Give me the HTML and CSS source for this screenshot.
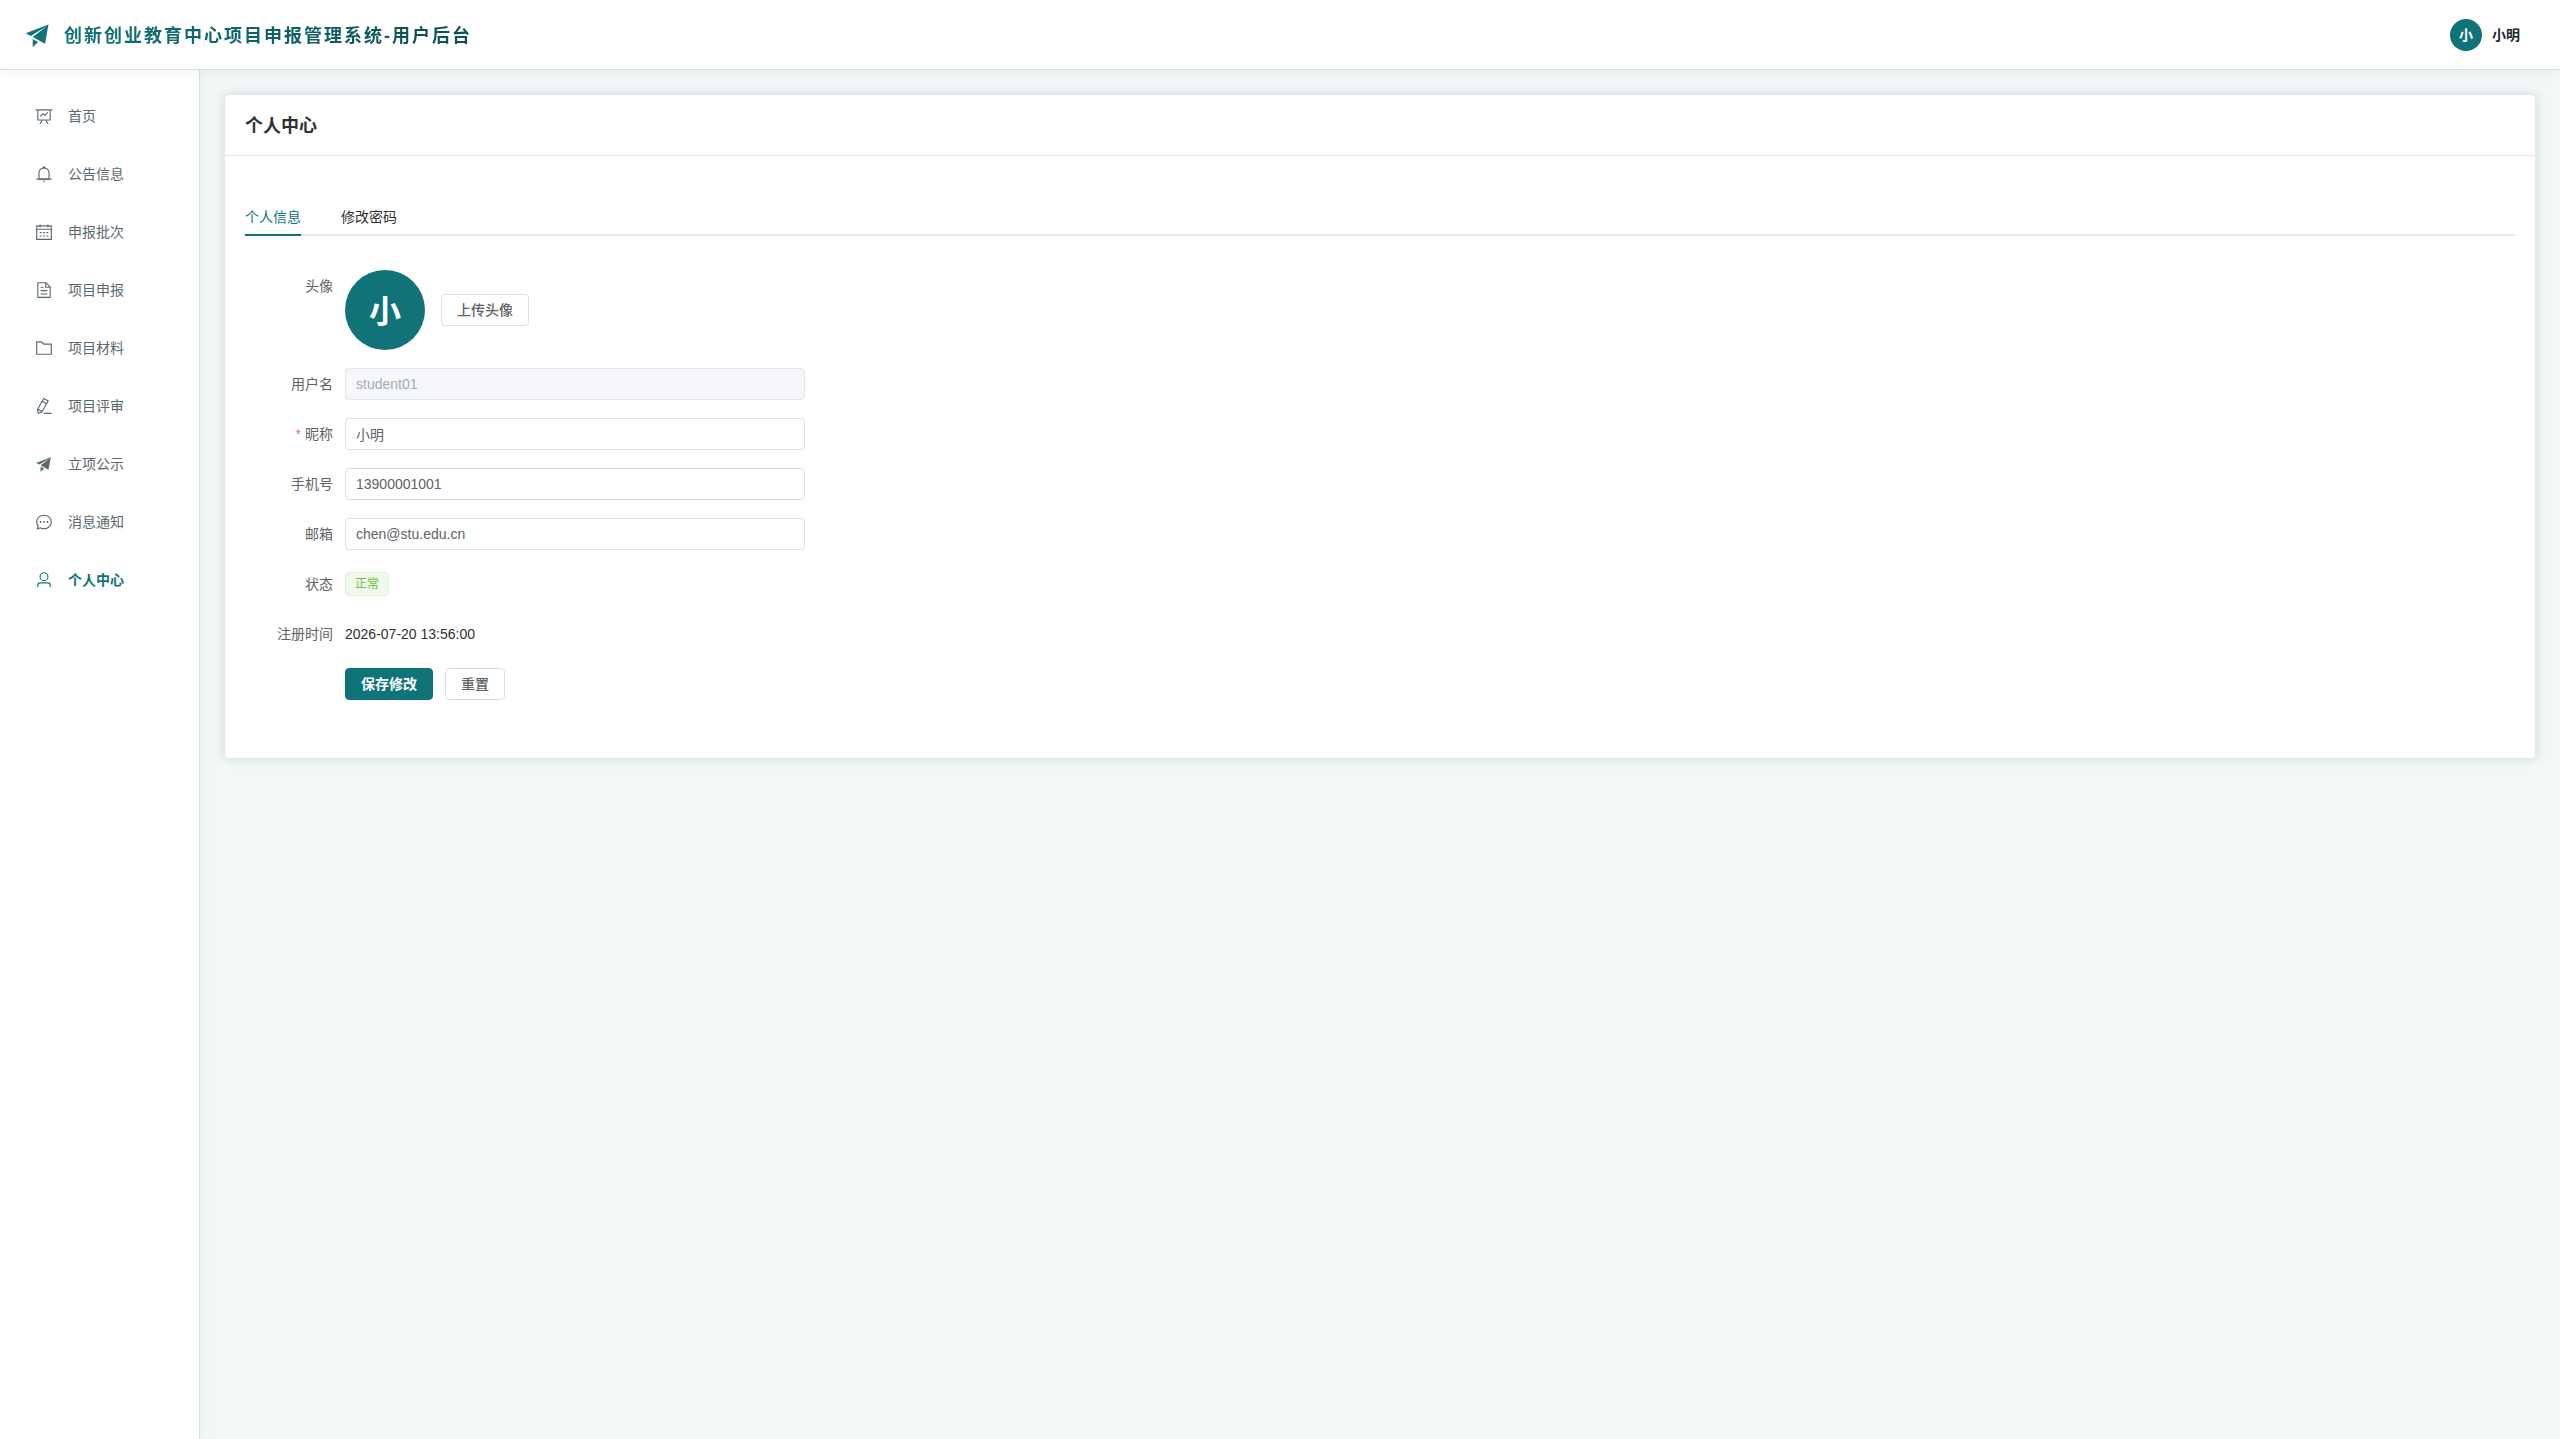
FILE: index.html
```html
<!DOCTYPE html>
<html lang="zh-CN">
<head>
  <meta charset="UTF-8">
  <title>个人中心 - 创新创业教育中心项目申报管理系统</title>
  <link rel="stylesheet" href="styles.css">
</head>
<body>
  <header class="header">
    <div class="brand">
      <svg class="brand-icon" viewBox="0 0 1024 1024"><path d="m64 448 832-320-128 704-446.08-243.328L832 192 242.816 545.536zm256 512V657.024L512 768z"/></svg>
      <span class="brand-title">创新创业教育中心项目申报管理系统-用户后台</span>
    </div>
    <div class="user">
      <span class="avatar">小</span>
      <span class="user-name">小明</span>
    </div>
  </header>

  <div class="container">
    <nav class="sidebar">
      <a class="menu-item" href="#">
        <svg viewBox="0 0 1024 1024"><path d="M359.168 768H160a32 32 0 0 1-32-32V192H64a32 32 0 0 1 0-64h896a32 32 0 1 1 0 64h-64v544a32 32 0 0 1-32 32H665.216l110.848 192h-73.856L591.36 768H433.024L322.176 960H248.32zM832 192H192v512h640zM342.656 534.656a32 32 0 1 1-45.312-45.312L444.992 341.76l125.44 94.08L679.04 300.032a32 32 0 1 1 49.92 39.936L581.632 524.224 451.008 426.24 342.656 534.592z"/></svg>
        <span>首页</span>
      </a>
      <a class="menu-item" href="#">
        <svg viewBox="0 0 1024 1024"><path d="M512 64a64 64 0 0 1 64 64v64H448v-64a64 64 0 0 1 64-64"/><path d="M256 768h512V448a256 256 0 1 0-512 0zm256-640a320 320 0 0 1 320 320v384H192V448a320 320 0 0 1 320-320"/><path d="M96 768h832q32 0 32 32t-32 32H96q-32 0-32-32t32-32m352 128h128a64 64 0 0 1-128 0"/></svg>
        <span>公告信息</span>
      </a>
      <a class="menu-item" href="#">
        <svg viewBox="0 0 1024 1024"><path d="M128 384v512h768V192H768v32a32 32 0 1 1-64 0v-32H320v32a32 32 0 0 1-64 0v-32H128v128h768v64zm192-256h384V96a32 32 0 1 1 64 0v32h160a32 32 0 0 1 32 32v768a32 32 0 0 1-32 32H96a32 32 0 0 1-32-32V160a32 32 0 0 1 32-32h160V96a32 32 0 0 1 64 0zm-32 384h64a32 32 0 0 1 0 64h-64a32 32 0 0 1 0-64m0 192h64a32 32 0 1 1 0 64h-64a32 32 0 1 1 0-64m192-192h64a32 32 0 0 1 0 64h-64a32 32 0 0 1 0-64m0 192h64a32 32 0 1 1 0 64h-64a32 32 0 1 1 0-64m192-192h64a32 32 0 1 1 0 64h-64a32 32 0 1 1 0-64m0 192h64a32 32 0 1 1 0 64h-64a32 32 0 1 1 0-64"/></svg>
        <span>申报批次</span>
      </a>
      <a class="menu-item" href="#">
        <svg viewBox="0 0 1024 1024"><path d="M832 384H576V128H192v768h640zm-26.496-64L640 154.496V320zM160 64h480l256 256v608a32 32 0 0 1-32 32H160a32 32 0 0 1-32-32V96a32 32 0 0 1 32-32m160 448h384v64H320zm0-192h160v64H320zm0 384h384v64H320z"/></svg>
        <span>项目申报</span>
      </a>
      <a class="menu-item" href="#">
        <svg viewBox="0 0 1024 1024"><path d="M128 192v640h768V320H485.76L357.504 192zm-32-64h287.872l128.384 128H928a32 32 0 0 1 32 32v576a32 32 0 0 1-32 32H96a32 32 0 0 1-32-32V160a32 32 0 0 1 32-32"/></svg>
        <span>项目材料</span>
      </a>
      <a class="menu-item" href="#">
        <svg viewBox="0 0 1024 1024"><path d="m199.04 672.64 193.984 112 224-387.968-193.92-112-224 388.032zm-23.872 60.16 32.896 148.288 144.896-45.696zM455.04 229.248l193.92 112 56.704-98.112-193.984-112zM104.32 708.8l384-665.024 304.768 175.936L409.152 884.8h.064l-248.448 78.336zm384 254.272v-64h448v64z"/></svg>
        <span>项目评审</span>
      </a>
      <a class="menu-item" href="#">
        <svg viewBox="0 0 1024 1024"><path d="m64 448 832-320-128 704-446.08-243.328L832 192 242.816 545.536zm256 512V657.024L512 768z"/></svg>
        <span>立项公示</span>
      </a>
      <a class="menu-item" href="#">
        <svg viewBox="0 0 1024 1024"><path d="m174.72 855.68 135.296-45.12 23.68 11.84C388.096 849.536 448.576 864 512 864c211.84 0 384-166.784 384-352S723.84 160 512 160 128 326.784 128 512c0 69.12 24.96 139.264 70.848 199.232l22.08 28.8-46.272 115.584zm-45.248 82.56A32 32 0 0 1 89.6 896l58.368-145.92C94.72 680.32 64 596.864 64 512 64 299.904 256 96 512 96s448 203.904 448 416-192 416-448 416a461 461 0 0 1-206.912-48.384l-175.616 58.56z"/><path d="M512 563.2a51.2 51.2 0 1 1 0-102.4 51.2 51.2 0 0 1 0 102.4m192 0a51.2 51.2 0 1 1 0-102.4 51.2 51.2 0 0 1 0 102.4m-384 0a51.2 51.2 0 1 1 0-102.4 51.2 51.2 0 0 1 0 102.4"/></svg>
        <span>消息通知</span>
      </a>
      <a class="menu-item active" href="#">
        <svg viewBox="0 0 1024 1024"><path d="M512 512a192 192 0 1 0 0-384 192 192 0 0 0 0 384m0 64a256 256 0 1 1 0-512 256 256 0 0 1 0 512m320 320v-96a96 96 0 0 0-96-96H288a96 96 0 0 0-96 96v96a32 32 0 1 1-64 0v-96a160 160 0 0 1 160-160h448a160 160 0 0 1 160 160v96a32 32 0 1 1-64 0"/></svg>
        <span>个人中心</span>
      </a>
    </nav>

    <main class="main">
      <section class="card">
        <h1 class="card-header">个人中心</h1>
        <div class="card-body">
          <div class="tabs" role="tablist">
            <button class="tab active" type="button" role="tab" aria-selected="true">个人信息</button>
            <button class="tab" type="button" role="tab" aria-selected="false">修改密码</button>
          </div>

          <form class="profile-form" action="">
            <div class="form-item">
              <span class="label">头像</span>
              <div class="avatar-row">
                <span class="avatar avatar-large">小</span>
                <button class="btn" type="button">上传头像</button>
              </div>
            </div>
            <div class="form-item">
              <label class="label" for="username">用户名</label>
              <input id="username" type="text" name="username" value="student01" disabled>
            </div>
            <div class="form-item">
              <label class="label required" for="nickname">昵称</label>
              <input id="nickname" type="text" name="nickname" value="小明">
            </div>
            <div class="form-item">
              <label class="label" for="phone">手机号</label>
              <input id="phone" type="text" name="phone" value="13900001001">
            </div>
            <div class="form-item">
              <label class="label" for="email">邮箱</label>
              <input id="email" type="text" name="email" value="chen@stu.edu.cn">
            </div>
            <div class="form-item">
              <span class="label">状态</span>
              <div class="content"><span class="tag">正常</span></div>
            </div>
            <div class="form-item">
              <span class="label">注册时间</span>
              <div class="content">2026-07-20 13:56:00</div>
            </div>
            <div class="form-item">
              <span class="label"></span>
              <div class="content">
                <button class="btn btn-primary" type="submit">保存修改</button>
                <button class="btn" type="reset">重置</button>
              </div>
            </div>
          </form>
        </div>
      </section>
    </main>
  </div>
</body>
</html>
```
FILE: styles.css
```css
* {
  box-sizing: border-box;
}

body {
  margin: 0;
  min-height: 100vh;
  display: flex;
  flex-direction: column;
  background: #f2f7f8;
  color: #303133;
  font-family: "Liberation Sans", "Noto Sans CJK SC", sans-serif;
  font-size: 14px;
}

button,
input {
  font-family: inherit;
  font-size: 14px;
}

svg {
  fill: currentColor;
  flex-shrink: 0;
}

/* header */
.header {
  position: relative;
  z-index: 2;
  height: 70px;
  padding: 0 40px 0 24px;
  display: flex;
  align-items: center;
  justify-content: space-between;
  background: #fff;
  border-bottom: 1px solid #d3e0e0;
  box-shadow: 0 2px 12px rgba(0, 0, 0, 0.05);
}

.brand {
  display: flex;
  align-items: center;
  gap: 12px;
}

.brand-icon {
  width: 28px;
  height: 28px;
  color: #0f7377;
}

.brand-title {
  padding-bottom: 2px;
  font-size: 18px;
  font-weight: 700;
  letter-spacing: 2px;
  background: linear-gradient(90deg, #0f7377, #0b5054);
  background-clip: text;
  -webkit-background-clip: text;
  color: transparent;
}

.user {
  display: flex;
  align-items: center;
  gap: 10px;
}

.user-name {
  padding-bottom: 2px;
  font-weight: 700;
  color: #1c2b33;
}

.avatar {
  width: 32px;
  height: 32px;
  padding-bottom: 2px;
  border-radius: 50%;
  display: flex;
  align-items: center;
  justify-content: center;
  background: #0f7377;
  color: #fff;
  font-weight: 700;
}

.avatar-large {
  width: 80px;
  height: 80px;
  font-size: 32px;
}

/* sidebar */
.container {
  flex: 1;
  display: flex;
}

.sidebar {
  position: relative;
  z-index: 1;
  width: 200px;
  flex-shrink: 0;
  padding: 21px 12px;
  display: flex;
  flex-direction: column;
  gap: 8px;
  background: #fff;
  border-right: 1px solid #d3e0e0;
  box-shadow: 2px 0 12px rgba(0, 0, 0, 0.04);
}

.menu-item {
  height: 50px;
  padding: 0 23px;
  display: flex;
  align-items: center;
  gap: 15px;
  color: #5a6872;
  text-decoration: none;
}

.menu-item svg {
  width: 18px;
  height: 18px;
}

.menu-item span {
  padding-bottom: 2px;
}

.menu-item.active {
  color: #0f7377;
  font-weight: 700;
}

/* card */
.main {
  flex: 1;
  padding: 24px;
}

.card {
  background: #fff;
  border: 1px solid #e4e7ed;
  border-radius: 4px;
  box-shadow: 0 0 12px rgba(0, 0, 0, 0.12);
}

.card-header {
  margin: 0;
  padding: 19px 20px 17px;
  border-bottom: 1px solid #e4e7ed;
  font-size: 18px;
  font-weight: 700;
  line-height: 24px;
}

.card-body {
  padding: 40px 20px;
}

.tabs {
  display: flex;
  gap: 40px;
  margin-bottom: 34px;
  box-shadow: inset 0 -2px #e4e7ed;
}

.tab {
  height: 40px;
  padding: 2px 0 0;
  border: none;
  border-bottom: 2px solid transparent;
  background: none;
  color: #303133;
  cursor: pointer;
}

.tab.active {
  color: #0f7377;
  border-bottom-color: #0f7377;
}

/* form */
.profile-form {
  max-width: 560px;
}

.form-item {
  display: flex;
  margin-bottom: 18px;
}

.label {
  width: 100px;
  flex-shrink: 0;
  padding-right: 12px;
  line-height: 32px;
  text-align: right;
  color: #606266;
}

.label.required::before {
  content: "*";
  margin-right: 4px;
  color: #f56c6c;
}

.form-item input {
  flex: 1;
  height: 32px;
  padding: 0 10px;
  border: 1px solid #dcdfe6;
  border-radius: 4px;
  background: #fff;
  color: #606266;
  outline: none;
}

.form-item input:focus {
  border-color: #0f7377;
}

.form-item input:disabled {
  background: #f5f7fa;
  border-color: #e4e7ed;
  color: #a8abb2;
}

.content {
  min-height: 32px;
  display: flex;
  align-items: center;
  gap: 12px;
}

.avatar-row {
  display: flex;
  align-items: center;
  gap: 16px;
}

.tag {
  height: 24px;
  padding: 0 9px;
  border: 1px solid #e1f3d8;
  border-radius: 4px;
  background: #f0f9eb;
  color: #67c23a;
  font-size: 12px;
  line-height: 22px;
}

.btn {
  height: 32px;
  padding: 0 15px 2px;
  border: 1px solid #dcdfe6;
  border-radius: 4px;
  background: #fff;
  color: #606266;
  font-weight: 500;
  cursor: pointer;
}

.btn-primary {
  background: #0f7377;
  border-color: #0f7377;
  color: #fff;
  font-weight: 700;
}
```
